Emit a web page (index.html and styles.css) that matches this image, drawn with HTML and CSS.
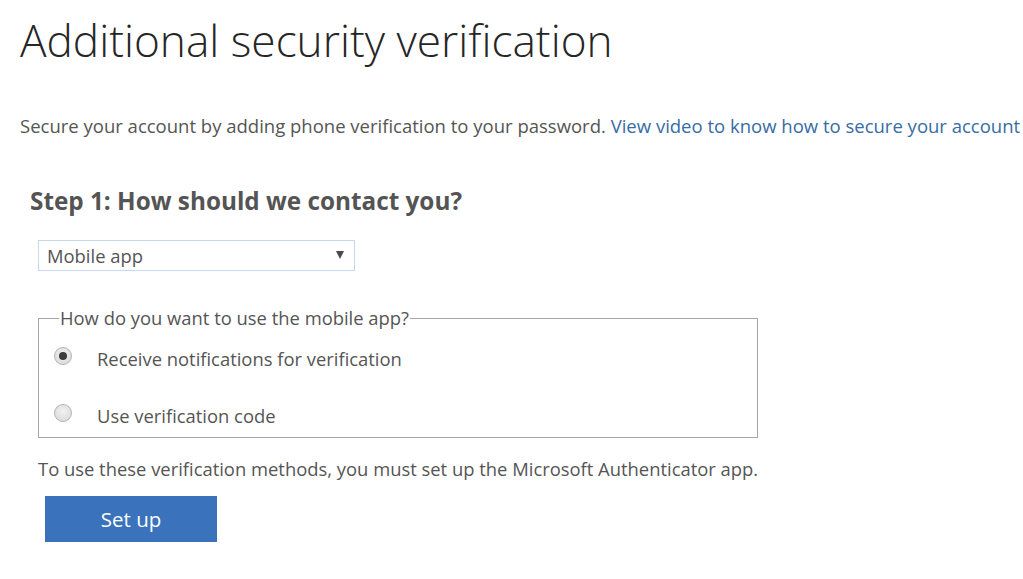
FILE: index.html
```html
<!DOCTYPE html>
<html lang="en">
<head>
<meta charset="utf-8">
<title>Additional security verification</title>
<link rel="stylesheet" href="styles.css">
</head>
<body>
<main class="page">
  <h1 class="title">Additional security verification</h1>
  <p class="intro">Secure your account by adding phone verification to your password. <a class="link" href="#">View video to know how to secure your account</a></p>
  <section class="step">
    <h2 class="step-title">Step 1: How should we contact you?</h2>
    <div class="select">
      <span class="select-value">Mobile app</span>
      <span class="select-arrow"></span>
    </div>
    <fieldset class="options">
      <legend class="options-legend">How do you want to use the mobile app?</legend>
      <label class="option option-first">
        <span class="radio radio-checked"></span>
        <span class="option-text">Receive notifications for verification</span>
      </label>
      <label class="option">
        <span class="radio"></span>
        <span class="option-text">Use verification code</span>
      </label>
    </fieldset>
    <p class="note">To use these verification methods, you must set up the Microsoft Authenticator app.</p>
    <button class="btn" type="button">Set up</button>
  </section>
</main>
</body>
</html>
```

FILE: styles.css
```css
html, body {
  margin: 0;
  padding: 0;
  background: #ffffff;
}

body {
  font-family: "Open Sans", "Noto Sans", "Liberation Sans", sans-serif;
  color: #555555;
}

.page {
  padding: 0 0 0 20px;
}

.title {
  margin: 0;
  padding-top: 11px;
  font-size: 44.2px;
  font-weight: 300;
  line-height: 58px;
  color: #262626;
}

.intro {
  margin: 45px 0 0 0;
  font-size: 18.5px;
  line-height: 24px;
  color: #555555;
  white-space: nowrap;
}

.link {
  color: #376ca5;
  text-decoration: none;
}

.step {
  padding-left: 18px;
}

.step-title {
  margin: 48px 0 0 -8px;
  font-size: 24.3px;
  font-weight: 700;
  line-height: 30px;
  color: #545454;
}

.select {
  margin-top: 24px;
  width: 317px;
  height: 31px;
  box-sizing: border-box;
  border: 1px solid #c5d8ec;
  display: flex;
  align-items: center;
  justify-content: space-between;
  padding: 0 10px 0 8px;
  font-size: 18.4px;
  line-height: 24px;
  color: #555555;
}

.select-arrow {
  width: 0;
  height: 0;
  border-left: 4px solid transparent;
  border-right: 4px solid transparent;
  border-top: 8px solid #4a4a4a;
  margin-top: -1px;
}

.options {
  margin: 35px 0 0 0;
  width: 720px;
  box-sizing: border-box;
  border: 1px solid #a6a6a6;
  padding: 0 0 9px 15px;
  display: flex;
  flex-direction: column;
  gap: 33px;
}

.options-legend {
  padding: 0 1px;
  margin-left: 5px;
  font-size: 18.4px;
  line-height: 24px;
  color: #555555;
}

.option {
  display: flex;
  align-items: flex-start;
  gap: 25px;
  font-size: 18.4px;
  line-height: 24px;
  color: #555555;
}

.option-first {
  margin-top: 17px;
}

.radio {
  width: 18px;
  height: 18px;
  margin-top: 0;
  box-sizing: border-box;
  border-radius: 50%;
  border: 1px solid #b4b4b4;
  background: radial-gradient(circle at 50% 40%, #f2f2f2, #d6d6d6);
  display: flex;
  align-items: center;
  justify-content: center;
  flex: none;
}

.radio-checked::after {
  content: "";
  width: 8px;
  height: 8px;
  border-radius: 50%;
  background: #3c3c3c;
}

.note {
  margin: 19px 0 0 0;
  font-size: 18.4px;
  line-height: 24px;
  color: #555555;
}

.btn {
  display: block;
  margin: 15px 0 0 7px;
  width: 172px;
  height: 46px;
  border: none;
  background: #3a73bb;
  color: #ffffff;
  font-family: "Open Sans", "Noto Sans", "Liberation Sans", sans-serif;
  font-size: 20.5px;
  line-height: 46px;
  padding: 0;
}
```
